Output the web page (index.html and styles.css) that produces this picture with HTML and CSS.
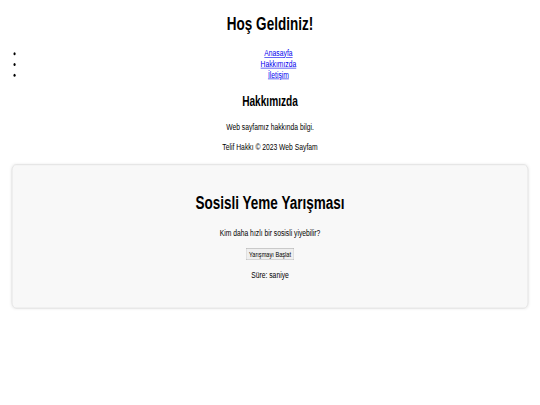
FILE: index.html
```html
<!DOCTYPE html>
<html lang="tr">
<head>
<meta charset="utf-8">
<title>Hoş Geldiniz!</title>
<link rel="stylesheet" href="styles.css">
</head>
<body>
<div class="frame">
<div class="viewport">
  <div class="page">
    <header>
      <h1 class="title">Hoş Geldiniz!</h1>
      <nav>
        <ul class="menu">
          <li><a href="#">Anasayfa</a></li>
          <li><a href="#">Hakkımızda</a></li>
          <li><a href="#">İletişim</a></li>
        </ul>
      </nav>
    </header>
    <div class="about">
      <h2 class="subtitle">Hakkımızda</h2>
      <p class="text">Web sayfamız hakkında bilgi.</p>
    </div>
    <footer>
      <p class="text">Telif Hakkı © 2023 Web Sayfam</p>
    </footer>
    <div class="contest">
      <h1 class="title">Sosisli Yeme Yarışması</h1>
      <p class="text">Kim daha hızlı bir sosisli yiyebilir?</p>
      <button class="start" type="button">Yarışmayı Başlat</button>
      <p class="text">Süre: <span class="time"></span> saniye</p>
    </div>
  </div>
</div>
</div>
</body>
</html>
```
FILE: styles.css
```css
html, body {
  margin: 0;
  padding: 0;
  background: #ffffff;
  overflow: hidden;
}

.frame {
  width: 540px;
  height: 405px;
  overflow: hidden;
}

.viewport {
  display: flow-root;
  width: 1280px;
  height: 675px;
  transform: scale(0.421875, 0.6);
  transform-origin: 0 0;
  font-family: "Liberation Sans", Arial, sans-serif;
  font-size: 16px;
  color: #000000;
  text-align: center;
}

.page {
  margin: 8px;
}

.title {
  font-size: 32px;
  font-weight: bold;
  margin: 21.44px 0;
}

.subtitle {
  font-size: 24px;
  font-weight: bold;
  margin: 19.92px 0;
}

.menu {
  margin: 16px 0;
  padding-left: 40px;
  list-style: disc;
}

.menu a {
  color: #0000ee;
  text-decoration: underline;
}

.text {
  margin: 16px 0;
}

.contest {
  margin: 20px;
  padding: 24px 24px 29px;
  background: #f8f8f8;
  border: 1px solid #d4d4d4;
  border-radius: 10px;
  box-shadow: 0 0 6px rgba(0, 0, 0, 0.08);
}

.start {
  font-family: "Liberation Sans", Arial, sans-serif;
  font-size: 13.333px;
}
```
